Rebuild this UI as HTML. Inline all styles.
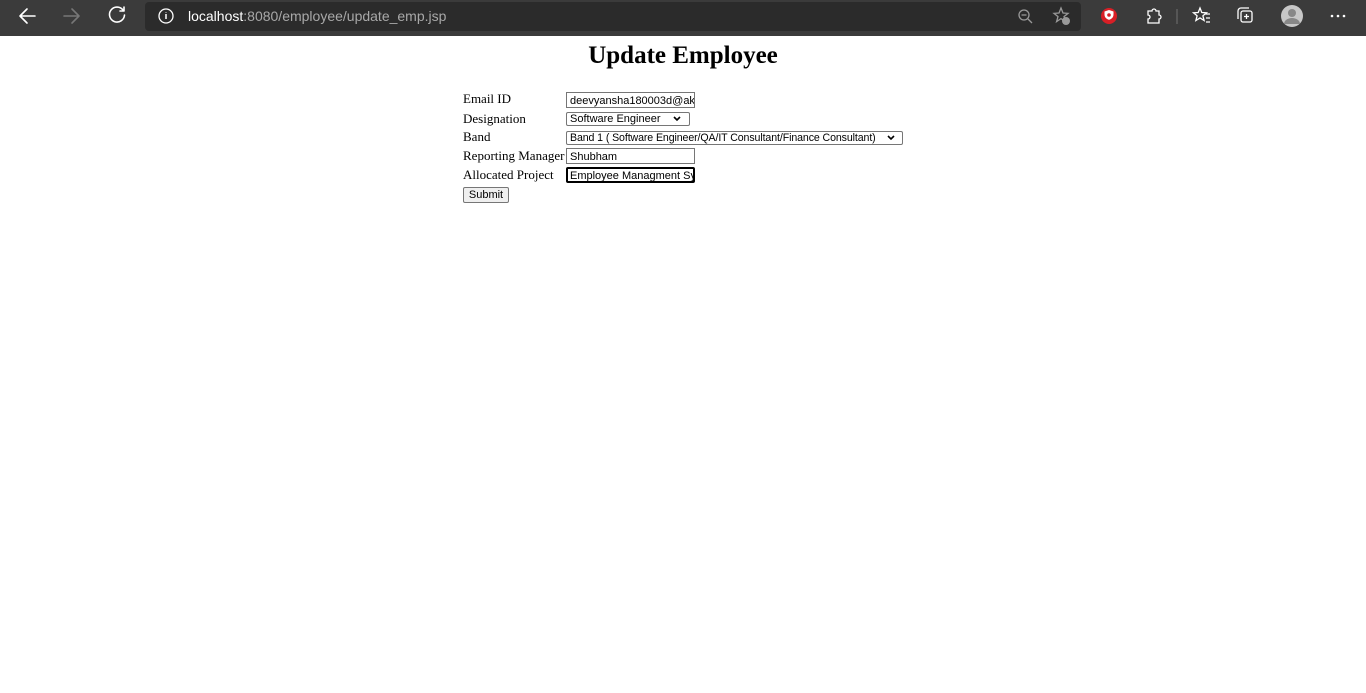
<!DOCTYPE html>
<html><head><meta charset="utf-8"><style>
*{margin:0;padding:0;box-sizing:border-box}
body{width:1366px;height:693px;background:#fff;position:relative;overflow:hidden;font-family:"Liberation Serif",serif}
.bar{position:absolute;left:0;top:0;width:1366px;height:36px;background:#3b3b3b}
.addr{position:absolute;left:145px;top:2px;width:936px;height:29px;background:#2b2b2b;border-radius:4px}
.url{position:absolute;left:188px;top:8px;font:14px "Liberation Sans",sans-serif;color:#a8a8a8}
.url b{font-weight:normal;color:#fff}
.a{position:absolute}
.lbl{position:absolute;left:463px;font-size:13px;color:#000}
.in{position:absolute;left:566px;height:16px;border:1px solid #767676;font:11px "Liberation Sans",sans-serif;padding:2px 3px 0;line-height:12px;background:#fff;white-space:nowrap;overflow:hidden}
</style></head><body>
<div class="bar"></div>
<svg class="a" style="left:0;top:0" width="1366" height="36" fill="none" stroke-linecap="round" stroke-linejoin="round">
<g stroke="#fff" stroke-width="1.6"><path d="M35 16H21M27 9l-7 7 7 7"/></g>
<g stroke="#777" stroke-width="1.6"><path d="M64 16h14M72 9l7 7-7 7"/></g>
<g stroke="#fff" stroke-width="1.6"><path d="M123 10a7.5 7.5 0 1 0 1.5 5"/><path d="M124 7v4h-4"/></g>
</svg>
<div class="addr"></div>
<svg class="a" style="left:0;top:0" width="1366" height="36" fill="none">
<circle cx="166" cy="16" r="7" stroke="#fff" stroke-width="1.3"/><path d="M166 14v5M166 12v.5" stroke="#fff" stroke-width="1.5"/>
<g stroke="#999" stroke-width="1.3"><circle cx="1024" cy="15" r="5"/><path d="M1028 19l4 4M1021.5 15h5"/>
<path d="M1061 8l2 5 5 .4-4 3.2 1.4 5-4.4-3-4.4 3 1.4-5-4-3.2 5-.4z"/></g>
<circle cx="1066" cy="21" r="4" fill="#999"/>
<circle cx="1109" cy="16" r="8" fill="#d81f26"/><path d="M1109 10l4.5 1.5v3c0 3-2.2 4.6-4.5 5.4-2.3-.8-4.5-2.4-4.5-5.4v-3z" fill="#fff"/><circle cx="1109" cy="15" r="1.8" fill="#d81f26"/>
<g stroke="#fff" stroke-width="1.3"><path d="M1148 11h4a2 2 0 0 1 4 0h3v4a2 2 0 0 1 0 4v4h-11v-4a2 2 0 0 0 0-4z"/>
<path d="M1177 9v15" stroke="#666"/>
<path d="M1200 8l1.8 4.5 4.7.3-3.6 3 1.2 4.7-4.1-2.6-4.1 2.6 1.2-4.7-3.6-3 4.7-.3zM1205 14h5M1206 18h4M1206 22h4"/>
<rect x="1241" y="11" width="11" height="11" rx="2"/><path d="M1238 19v-8a3 3 0 0 1 3-3h8M1246.5 14v5M1244 16.5h5"/></g>
<circle cx="1292" cy="16" r="11" fill="#c8c8c8"/><circle cx="1292" cy="13" r="4" fill="#888"/><path d="M1284 24a8 6 0 0 1 16 0" fill="#888"/>
<g fill="#fff"><circle cx="1332" cy="16" r="1.3"/><circle cx="1338" cy="16" r="1.3"/><circle cx="1344" cy="16" r="1.3"/></g>
</svg>
<div class="url"><b>localhost</b>:8080/employee/update_emp.jsp</div>

<div class="a" style="left:0;width:1366px;top:42px;text-align:center;font-size:25px;font-weight:bold">Update Employee</div>

<div class="lbl" style="top:91px">Email ID</div>
<div class="lbl" style="top:111px">Designation</div>
<div class="lbl" style="top:129px">Band</div>
<div class="lbl" style="top:148px">Reporting Manager</div>
<div class="lbl" style="top:167px">Allocated Project</div>

<div class="in" style="top:92px;width:129px">deevyansha180003d@akg</div>
<div class="in" style="top:112px;width:124px;height:14px;line-height:11px;padding-top:1px;border-radius:2px">Software Engineer</div>
<div class="in" style="top:131px;width:337px;height:14px;line-height:11px;padding-top:1px;border-radius:2px;font-size:10.6px;letter-spacing:-0.1px">Band 1 ( Software Engineer/QA/IT Consultant/Finance Consultant)</div>
<svg class="a" style="left:0;top:0" width="1366" height="200" fill="none" stroke="#000" stroke-width="1.6"><path d="M674 117l3 3 3-3M888 136l3 3 3-3"/></svg>
<div class="in" style="top:148px;width:129px">Shubham</div>
<div class="in" style="top:167px;width:129px;border:2px solid #000;border-radius:2px;padding:1px 2px">Employee Managment Sy</div>
<div class="a" style="left:463px;top:187px;width:46px;height:16px;border:1px solid #767676;background:#efefef;border-radius:2px;font:11px 'Liberation Sans',sans-serif;text-align:center;line-height:15px">Submit</div>
</body></html>
